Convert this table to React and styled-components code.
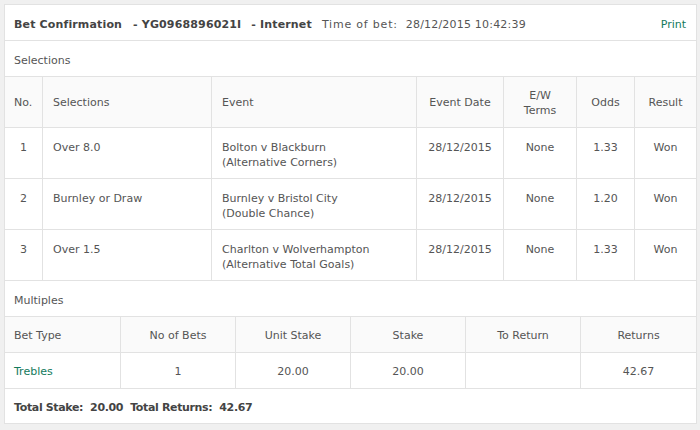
import React from "react";
import styled, { createGlobalStyle } from "styled-components";

const Global = createGlobalStyle`
  html, body { margin: 0; padding: 0; background: #f0f0f0; }
  body { font-family: "DejaVu Sans", Verdana, sans-serif; font-size: 11px; color: #555; }
`;

const Panel = styled.div`
  box-sizing: border-box;
  width: 693px;
  margin: 4px 0 0 4px;
  background: #fff;
  border: 1px solid #e2e2e2;
`;

const TitleBar = styled.div`
  box-sizing: border-box;
  display: flex;
  align-items: center;
  height: 36px;
  padding: 3px 10px 0 9px;
  border-bottom: 1px solid #e2e2e2;
  white-space: pre;
`;

const Strong = styled.span`
  font-weight: bold;
  color: #444;
  letter-spacing: ${(p) => p.$ls ?? 0.15}px;
  margin-left: ${(p) => p.$gap || 0}px;
`;

const Plain = styled.span`
  color: #555;
  letter-spacing: ${(p) => p.$ls ?? 0}px;
  margin-left: ${(p) => p.$gap || 0}px;
`;

const PrintLink = styled.a`
  margin-left: auto;
  color: #137a5c;
  text-decoration: none;
  cursor: pointer;
`;

const SectionLabel = styled.div`
  box-sizing: border-box;
  display: flex;
  align-items: center;
  height: 36px;
  padding: 3px 0 0 9px;
  border-bottom: 1px solid #e2e2e2;
`;

const Row = styled.div`
  display: grid;
  grid-template-columns: ${(p) => p.$cols};
  min-height: ${(p) => p.$h}px;
  border-bottom: 1px solid #e2e2e2;
  background: ${(p) => (p.$head ? "#fafafa" : "#fff")};
`;

const Cell = styled.div`
  box-sizing: border-box;
  display: flex;
  flex-direction: column;
  justify-content: ${(p) => (p.$top ? "flex-start" : "center")};
  align-items: ${(p) => (p.$align === "left" ? "flex-start" : "center")};
  text-align: ${(p) => (p.$align === "left" ? "left" : "center")};
  padding: ${(p) => (p.$top ? "13px" : "3px")} 10px 0 ${(p) => p.$pl ?? 10}px;
  line-height: 14.5px;
  border-left: ${(p) => (p.$first ? "none" : "1px solid #e2e2e2")};
  color: ${(p) => (p.$green ? "#137a5c" : "#555")};
`;

const TotalBar = styled.div`
  box-sizing: border-box;
  display: flex;
  align-items: center;
  height: 34px;
  padding: 3px 0 0 9px;
  white-space: pre;
`;

const selCols = "37px 169px 205px 87px 73px 58px 62px";
const multCols = "115px 115px 115px 115px 115px 116px";

const selections = [
  { no: 1, sel: "Over 8.0", ev: "Bolton v Blackburn", mk: "(Alternative Corners)", date: "28/12/2015", ew: "None", odds: "1.33", res: "Won" },
  { no: 2, sel: "Burnley or Draw", ev: "Burnley v Bristol City", mk: "(Double Chance)", date: "28/12/2015", ew: "None", odds: "1.20", res: "Won" },
  { no: 3, sel: "Over 1.5", ev: "Charlton v Wolverhampton", mk: "(Alternative Total Goals)", date: "28/12/2015", ew: "None", odds: "1.33", res: "Won" },
];

export default function App() {
  return (
    <>
      <Global />
      <Panel>
        <TitleBar>
          <Strong>Bet Confirmation</Strong>
          <Strong $gap={11}>- YG0968896021I</Strong>
          <Strong $gap={10}>- Internet</Strong>
          <Plain $gap={10} $ls={0.8}>Time of bet:</Plain>
          <Plain $gap={8} $ls={0.2}>28/12/2015 10:42:39</Plain>
          <PrintLink>Print</PrintLink>
        </TitleBar>

        <SectionLabel>Selections</SectionLabel>
        <Row $cols={selCols} $h={50} $head>
          <Cell $first $align="left" $pl={9}>No.</Cell>
          <Cell $align="left">Selections</Cell>
          <Cell $align="left">Event</Cell>
          <Cell>Event Date</Cell>
          <Cell>
            <span>E/W</span>
            <span>Terms</span>
          </Cell>
          <Cell>Odds</Cell>
          <Cell>Result</Cell>
        </Row>
        {selections.map((s) => (
          <Row key={s.no} $cols={selCols} $h={50}>
            <Cell $first $top>{s.no}</Cell>
            <Cell $top $align="left">{s.sel}</Cell>
            <Cell $top $align="left">
              <span>{s.ev}</span>
              <span>{s.mk}</span>
            </Cell>
            <Cell $top>{s.date}</Cell>
            <Cell $top>{s.ew}</Cell>
            <Cell $top>{s.odds}</Cell>
            <Cell $top>{s.res}</Cell>
          </Row>
        ))}

        <SectionLabel>Multiples</SectionLabel>
        <Row $cols={multCols} $h={35} $head>
          <Cell $first $align="left" $pl={9}>Bet Type</Cell>
          <Cell>No of Bets</Cell>
          <Cell>Unit Stake</Cell>
          <Cell>Stake</Cell>
          <Cell>To Return</Cell>
          <Cell>Returns</Cell>
        </Row>
        <Row $cols={multCols} $h={35}>
          <Cell $first $align="left" $pl={9} $green>Trebles</Cell>
          <Cell>1</Cell>
          <Cell>20.00</Cell>
          <Cell>20.00</Cell>
          <Cell></Cell>
          <Cell>42.67</Cell>
        </Row>
        <TotalBar>
          <Strong $ls={-0.35}>Total Stake:  20.00  Total Returns:  42.67</Strong>
        </TotalBar>
      </Panel>
    </>
  );
}
